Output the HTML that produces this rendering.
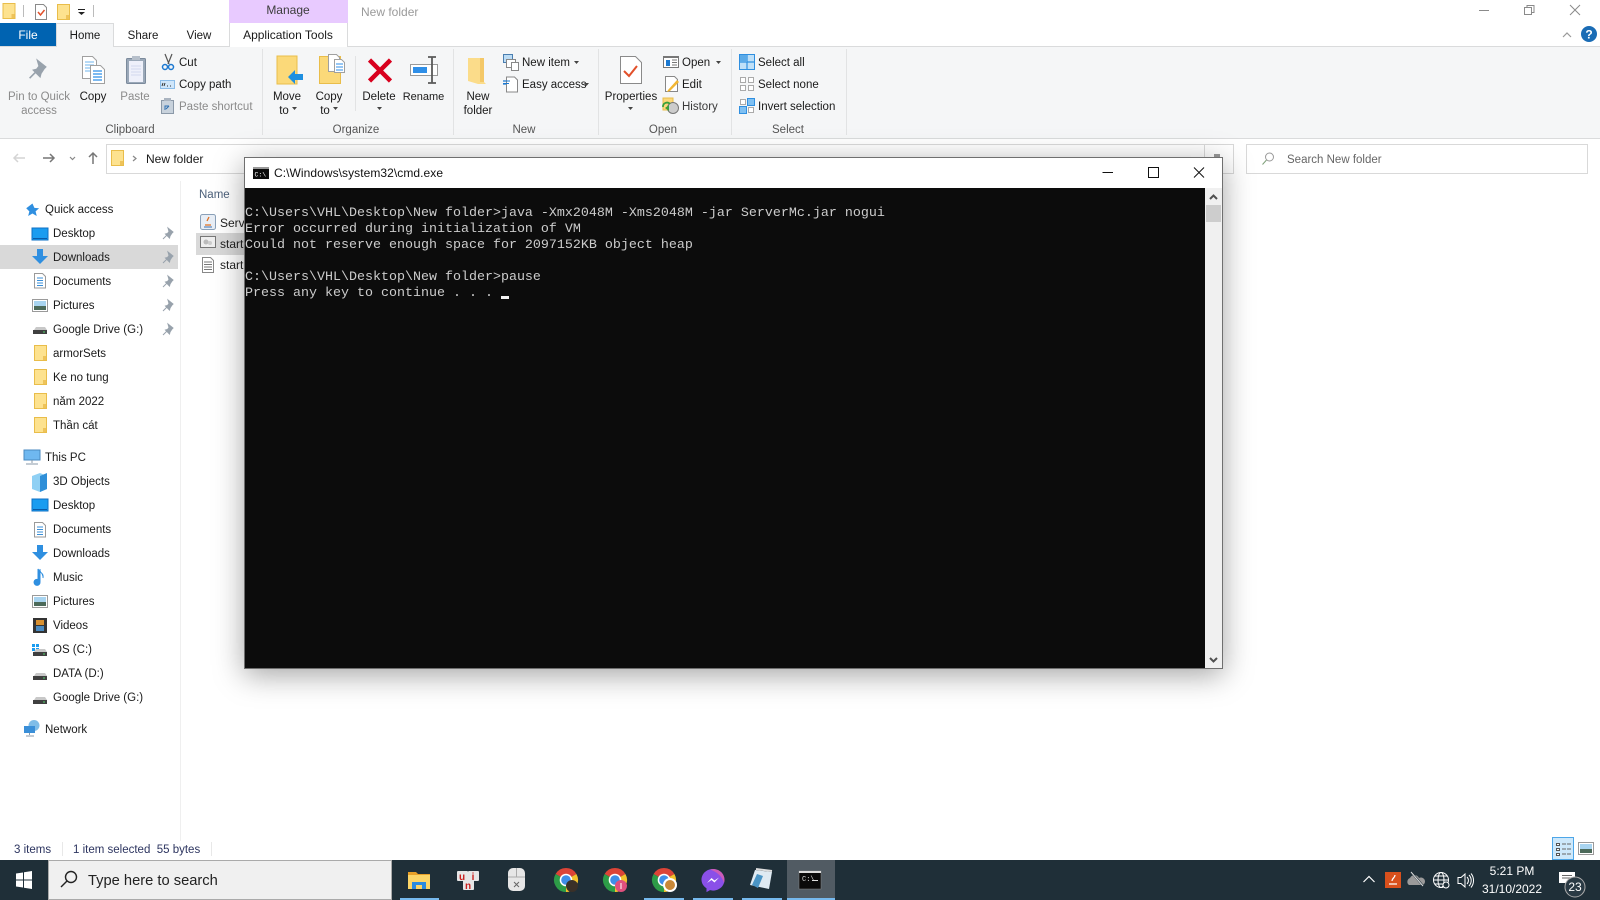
<!DOCTYPE html>
<html><head><meta charset="utf-8"><title>cmd</title>
<style>
html,body{margin:0;padding:0;background:#fff;width:1600px;height:900px;overflow:hidden}
svg{display:block;position:absolute;left:0;top:0}
text{font-family:"Liberation Sans","Noto Sans CJK SC",sans-serif;font-size:11.5px;fill:#1a1a1a;dominant-baseline:auto}
.m{text-anchor:middle}
.g{fill:#8b8b8b}
.r{fill:#3c3c3c}
.t{fill:#262626}
.f{font-size:12px}
.c{font-family:"Liberation Mono",monospace;font-size:13.33px;fill:#cccccc}
.w{fill:#fff}
#cmd{position:absolute;left:244px;top:157px;width:979px;height:512px;background:#fff;border:1px solid #6f6f6f;box-sizing:border-box;box-shadow:0 6px 28px rgba(0,0,0,.36)}
</style></head><body>
<svg width="1600" height="900" viewBox="0 0 1600 900">
<defs>
<g id="fold"><rect x=".5" y=".5" width="12" height="15" fill="#fde28f" stroke="#e9bd4a"/><rect x="9" y="11" width="3" height="4" fill="#eec35a"/></g>
<g id="pin"><path d="M6 1l5 4-1 1-2 3-.5 2-4-4 2-.5 1.500-2zM4.500 8.500L1 12" fill="#98a2ac" stroke="#98a2ac" stroke-width="1"/></g>
<g id="drive"><path d="M2 7l2-3h9l2 3z" fill="#c8c8c8"/><rect x="1" y="7" width="14" height="4" fill="#3f3f3f"/><rect x="11" y="8.500" width="2" height="1" fill="#4fd06a"/></g>
<g id="desk"><rect x="0" y="0" width="16" height="12" fill="#1a9cf0" stroke="#0f70c4"/><rect x="1" y="10" width="14" height="1" fill="#0a5aa8"/></g>
<g id="dl"><path d="M5 0h6v7h5l-8 8-8-8h5z" fill="#2f8fe0"/></g>
<g id="doc"><path d="M.5.5h8l3 3v11.500H.5z" fill="#fff" stroke="#9a9a9a"/><path d="M3 5h6M3 7.500h6M3 10h6M3 12.500h6" stroke="#3a8fd8"/></g>
<g id="pic"><rect x=".5" y=".5" width="15" height="12" fill="#fff" stroke="#9a9a9a"/><rect x="2" y="2" width="12" height="5" fill="#a8d4f0"/><rect x="2" y="7" width="12" height="4" fill="#4c6a5a"/></g>
<g id="chrome"><path d="M0 0L-10.400-6A12 12 0 0 1 10.400-6z" fill="#dc4437"/><path d="M0 0L10.400-6A12 12 0 0 1 0 12z" fill="#f3c22c"/><path d="M0 0L0 12A12 12 0 0 1-10.400-6z" fill="#2d9c47"/><circle r="6.300" fill="#fff"/><circle r="4.800" fill="#3f8ee8"/></g>
<path id="arr" d="M0 0h5l-2.500 3z" fill="#444"/>
</defs>

<!-- title row -->
<use href="#fold" x="2.500" y="3"/>
<rect x="23" y="5" width="1" height="12" fill="#bbb"/>
<path d="M35.500 4.500h8l3 3v12h-11z" fill="#fff" stroke="#8a8a8a"/><path d="M38 12l2.500 3 4-5" fill="none" stroke="#e2502a" stroke-width="1.500"/>
<use href="#fold" x="57" y="4"/>
<rect x="78" y="9" width="7" height="1" fill="#222"/><path d="M78 12h7l-3.500 3z" fill="#222"/>
<rect x="93" y="5" width="1" height="12" fill="#bbb"/>
<rect x="229" y="0" width="119" height="23" fill="#e8caff"/>
<text class="m r f" x="288" y="14">Manage</text>
<text x="361" y="16" class="g f" style="fill:#9a9a9a">New folder</text>
<!-- window controls -->
<path d="M1479 10.500h10" stroke="#8a8a8a"/>
<path d="M1524.500 7.500h7v7h-7zM1527 7V5.500h7v7h-2.500" fill="none" stroke="#8a8a8a"/>
<path d="M1570 5l10 10M1580 5l-10 10" stroke="#8a8a8a"/>
<path d="M1563 37l4-4 4 4" fill="none" stroke="#999" stroke-width="1.200"/>
<circle cx="1589" cy="34" r="8" fill="#1a6cb5"/><text class="m w" x="1589" y="38.500" style="font-size:12px;font-weight:bold">?</text>

<!-- tabs -->
<rect x="0" y="46" width="1600" height="92" fill="#f5f6f7"/>
<rect x="0" y="46" width="1600" height="1" fill="#dadbdc"/>
<rect x="0" y="138" width="1600" height="1" fill="#dadbdc"/>
<rect x="0" y="23" width="56" height="23" fill="#0063b1"/>
<text class="m w f" x="28" y="39">File</text>
<path d="M56.500 47V23.500h57V47" fill="#f5f6f7" stroke="#dadbdc"/>
<text class="m" x="85" y="39">Home</text>
<text class="m" x="143" y="39">Share</text>
<text class="m" x="199" y="39">View</text>
<path d="M229.500 46V23.500h118V46" fill="#fff" stroke="#dadbdc"/>
<rect x="230" y="23" width="117" height="24" fill="#fff"/>
<text class="m f" x="288" y="39">Application Tools</text>

<!-- ribbon seps -->
<g fill="#e2e3e4"><rect x="262" y="49" width="1" height="86"/><rect x="453" y="49" width="1" height="86"/><rect x="598" y="49" width="1" height="86"/><rect x="731" y="49" width="1" height="86"/><rect x="846" y="49" width="1" height="86"/><rect x="355" y="56" width="1" height="55"/></g>

<!-- clipboard -->
<g transform="translate(28,59) scale(1.600)"><use href="#pin"/></g>
<text class="m g" x="39" y="100">Pin to Quick</text><text class="m g" x="39" y="114">access</text>
<path d="M82.500 56.500h10l4 4v18h-14z" fill="#fff" stroke="#a0a0a0"/><path d="M85 62h9M85 65h9M85 68h9M85 71h9" stroke="#6fb4ee"/>
<path d="M90.500 65.500h10l4 4v14h-14z" fill="#fff" stroke="#a0a0a0"/><path d="M93 71h9M93 74h9M93 77h9M93 80h9" stroke="#2f8fe8" stroke-width="1.200"/>
<text class="m" x="93" y="100">Copy</text>
<rect x="126.500" y="58.500" width="19" height="25" rx="1" fill="#9aa8b8" stroke="#7b8a9c"/><rect x="129" y="61" width="14" height="21" fill="#eef0fa"/><path d="M131 66h10M131 69h10M131 72h10M131 75h10" stroke="#d3d8ee"/><rect x="132" y="56" width="8" height="4" fill="#b6bfca"/>
<text class="m g" x="135" y="100">Paste</text>
<path d="M165 54l4 10M172 54l-4 10" stroke="#555" stroke-width="1.200"/><circle cx="165" cy="67" r="2.500" fill="none" stroke="#1b78d0" stroke-width="1.500"/><circle cx="171" cy="67" r="2.500" fill="none" stroke="#1b78d0" stroke-width="1.500"/>
<text x="179" y="66">Cut</text>
<rect x="160.500" y="80.500" width="14" height="8" fill="#cfe6fa" stroke="#8bbce8"/><path d="M162 86l1-3M164 86l1-3M167 86h1M170 86h1M173 86h0" stroke="#333"/>
<text x="179" y="88">Copy path</text>
<rect x="161.500" y="100.500" width="12" height="13" fill="#c8d2dc" stroke="#8b99a8"/><rect x="164" y="98" width="7" height="3" fill="#aab4c0"/><path d="M165 110v-4h4M169 106l-3 3" stroke="#2d6fb0" fill="none"/>
<text x="179" y="110" class="g">Paste shortcut</text>
<text class="m r" x="130" y="133" style="fill:#555">Clipboard</text>

<!-- organize -->
<rect x="277" y="56" width="20" height="28" fill="#fbd979" stroke="#e9bd4a"/>
<path d="M288 77l7-7v4h8v6h-8v4z" fill="#1e8fe0"/>
<text class="m" x="287" y="100">Move</text><text class="m" x="284" y="114">to</text><use href="#arr" x="292" y="107"/>
<rect x="319.500" y="56.500" width="21" height="27" fill="#fbd979" stroke="#e9bd4a"/>
<path d="M328.500 54.500h8l3 3v14h-11z" fill="#fff" stroke="#a0a0a0"/><path d="M334.500 59.500h7l3 3v10h-10z" fill="#fff" stroke="#a0a0a0"/><path d="M336 64h7M336 67h7M336 70h7" stroke="#2f8fe8"/>
<text class="m" x="329" y="100">Copy</text><text class="m" x="325" y="114">to</text><use href="#arr" x="333" y="107"/>
<path d="M369.500 60l21 21M390.500 60l-21 21" stroke="#d8001e" stroke-width="4.500"/>
<text class="m" x="379" y="100">Delete</text><use href="#arr" x="377" y="107"/>
<rect x="410.500" y="64.500" width="27" height="11" fill="#fff" stroke="#9a9a9a"/><rect x="413" y="67" width="14" height="6" fill="#2f8fe8"/><path d="M428 57h8M432 57v26M428 83h8" stroke="#5a5a5a" stroke-width="1.800" fill="none"/>
<text class="m" x="423.500" y="100" style="font-size:11px">Rename</text>
<text class="m r" x="356" y="133" style="fill:#555">Organize</text>

<!-- new -->
<path d="M468 58h16v24l2 2-8 0-10-3z" fill="#fbdc8a"/><rect x="480" y="58" width="4" height="24" fill="#f4c868"/>
<text class="m" x="478" y="100">New</text><text class="m" x="478" y="114">folder</text>
<rect x="503.500" y="54.500" width="9" height="8" fill="#bcdcf5" stroke="#4a7eb0"/><rect x="506.500" y="59.500" width="9" height="8" fill="#fff" stroke="#888"/><rect x="511.500" y="62.500" width="7" height="8" fill="#fff" stroke="#888"/>
<text x="522" y="66">New item</text><use href="#arr" x="574" y="61"/>
<path d="M503 81h7M503 84h6" stroke="#1b78d0" stroke-width="1.200"/><path d="M506.500 77h8l3 3v12h-11z" fill="#fff" stroke="#888"/><path d="M503 81h7M503 83.500h6" stroke="#1b78d0"/>
<text x="522" y="88">Easy access</text><use href="#arr" x="584" y="83"/>
<text class="m r" x="524" y="133" style="fill:#555">New</text>

<!-- open -->
<path d="M620.500 56.500h15l6 6v21h-21z" fill="#fff" stroke="#8a8a8a"/><path d="M624 71l5 5 8-10" fill="none" stroke="#e2502a" stroke-width="2"/>
<text class="m" x="631" y="100">Properties</text><use href="#arr" x="628" y="107"/>
<rect x="663.500" y="56.500" width="15" height="11" fill="#fff" stroke="#777"/><rect x="663" y="56" width="16" height="2" fill="#777"/><rect x="666" y="60" width="4" height="6" fill="#1b78d0"/><path d="M672 60h5M672 62.500h5M672 65h5" stroke="#777"/>
<text x="682" y="66">Open</text><use href="#arr" x="716" y="61"/>
<path d="M665.500 76.500h9l3 3v12h-12z" fill="#fff" stroke="#888"/><path d="M668 90l9-10 2 2-9 9-3 1z" fill="#f2b632"/>
<text x="682" y="88">Edit</text>
<rect x="663" y="98" width="10" height="12" fill="#fcd87a" stroke="#e9bd4a"/><circle cx="673" cy="108" r="5.500" fill="#ccc" stroke="#777"/><path d="M665 108l4-3v6z" fill="#3aa03a"/><path d="M663 107a4 4 0 0 1 7-3" fill="none" stroke="#3aa03a" stroke-width="1.800"/>
<text x="682" y="110" style="fill:#3a3a3a">History</text>
<text class="m r" x="663" y="133" style="fill:#555">Open</text>

<!-- select -->
<rect x="739.500" y="54.500" width="15" height="15" fill="#bfe0f8" stroke="#2f8fe0"/><path d="M747 54v16M739 62h16" stroke="#2f8fe0" stroke-width="1.200"/><rect x="740" y="55" width="7" height="7" fill="#5aaae8"/>
<text x="758" y="66">Select all</text>
<g fill="#fff" stroke="#aaa"><rect x="740.500" y="77.500" width="5" height="5"/><rect x="748.500" y="77.500" width="5" height="5"/><rect x="740.500" y="85.500" width="5" height="5"/><rect x="748.500" y="85.500" width="5" height="5"/></g>
<text x="758" y="88">Select none</text>
<rect x="740.500" y="99.500" width="5" height="5" fill="#fff" stroke="#aaa"/><rect x="747.500" y="98.500" width="7" height="7" fill="#7fc0f2" stroke="#2f8fe0"/><rect x="739.500" y="106.500" width="7" height="7" fill="#7fc0f2" stroke="#2f8fe0"/><rect x="748.500" y="107.500" width="5" height="5" fill="#fff" stroke="#aaa"/>
<text x="758" y="110">Invert selection</text>
<text class="m r" x="788" y="133" style="fill:#555">Select</text>

<!-- address row -->
<g transform="translate(0,-1)">
<path d="M25 159H14m4-4l-4 4 4 4" fill="none" stroke="#d4d4d4" stroke-width="1.500"/>
<path d="M43 159h11m-4-4l4 4-4 4" fill="none" stroke="#777" stroke-width="1.500"/>
<path d="M70 158l2.500 2.500 2.500-2.500" fill="none" stroke="#888" stroke-width="1.200"/>
<path d="M93 165v-11m-4 4l4-4 4 4" fill="none" stroke="#777" stroke-width="1.500"/>
</g>
<rect x="106.500" y="144.500" width="1127" height="29" fill="#fff" stroke="#d9d9d9"/>
<rect x="1204" y="145" width="1" height="28" fill="#d9d9d9"/>
<rect x="1214" y="154" width="6" height="7" fill="#999"/>
<use href="#fold" x="111" y="150"/>
<path d="M133 156l3 2.500-3 2.500" fill="none" stroke="#888" stroke-width="1.200"/>
<text x="146" y="163" class="f">New folder</text>
<rect x="1246.500" y="144.500" width="341" height="29" fill="#fff" stroke="#d9d9d9"/>
<circle cx="1269.500" cy="157" r="4" fill="none" stroke="#9a9a9a"/><path d="M1266.500 160l-4 4.500" stroke="#7fa07a"/>
<text x="1287" y="163" style="fill:#666">Search New folder</text>

<!-- nav pane -->
<rect x="180" y="181" width="1" height="660" fill="#efefef"/>
<rect x="0" y="245" width="178" height="24" fill="#d9d9d9"/>
<g transform="translate(27,202) scale(.78)"><path d="M7 2l2.500 5.500 6 .5-4.500 4 1.500 6-5.500-3.300L1.500 18l1.500-6L-1 8z" fill="#2f8fe0"/></g>
<text x="45" y="213">Quick access</text>
<use href="#desk" x="32" y="228"/><text x="53" y="237">Desktop</text>
<use href="#dl" x="32" y="249"/><text x="53" y="261">Downloads</text>
<use href="#doc" x="34" y="273"/><text x="53" y="285">Documents</text>
<use href="#pic" x="32" y="299"/><text x="53" y="309">Pictures</text>
<use href="#drive" x="32" y="323"/><text x="53" y="333">Google Drive (G:)</text>
<use href="#fold" x="34" y="345"/><text x="53" y="357">armorSets</text>
<use href="#fold" x="34" y="369"/><text x="53" y="381">Ke no tung</text>
<use href="#fold" x="34" y="393"/><text x="53" y="405">năm 2022</text>
<use href="#fold" x="34" y="417"/><text x="53" y="429">Thần cát</text>
<use href="#pin" x="162" y="227"/><use href="#pin" x="162" y="251"/><use href="#pin" x="162" y="275"/><use href="#pin" x="162" y="299"/><use href="#pin" x="162" y="323"/>
<rect x="24" y="450" width="16" height="10" fill="#6fb8f0" stroke="#4a8ac0"/><path d="M32 460v3M26 464h12" stroke="#8a9aa8"/>
<text x="45" y="461">This PC</text>
<path d="M40 473l7 3v13l-7 3-8-3v-13z" fill="#8fd0f4"/><path d="M40 476l7-3v16l-7 3z" fill="#2f8fd8"/><text x="53" y="485">3D Objects</text>
<use href="#desk" x="32" y="499"/><text x="53" y="509">Desktop</text>
<use href="#doc" x="34" y="522"/><text x="53" y="533">Documents</text>
<use href="#dl" x="32" y="545"/><text x="53" y="557">Downloads</text>
<path d="M40 569v13a3 3 0 1 1-2-2.500V569c2 4 6 4 5 9" fill="#2f8fe0" stroke="#2f8fe0"/><text x="53" y="581">Music</text>
<use href="#pic" x="32" y="595"/><text x="53" y="605">Pictures</text>
<rect x="33" y="618" width="14" height="15" fill="#333"/><rect x="36" y="620" width="8" height="5" fill="#d89030"/><rect x="36" y="626" width="8" height="5" fill="#4a8ac0"/><text x="53" y="629">Videos</text>
<g fill="#1b9cf0"><rect x="32" y="644" width="3" height="3"/><rect x="36" y="644" width="3" height="3"/><rect x="32" y="648" width="3" height="3"/><rect x="36" y="648" width="3" height="3"/></g><use href="#drive" x="32" y="645"/><text x="53" y="653">OS (C:)</text>
<use href="#drive" x="32" y="669"/><text x="53" y="677">DATA (D:)</text>
<use href="#drive" x="32" y="693"/><text x="53" y="701">Google Drive (G:)</text>
<circle cx="34" cy="725.500" r="5.500" fill="#7fbde8"/><rect x="24" y="726" width="11" height="7" fill="#3a8fd8"/><path d="M29.500 733v2M26 736h8" stroke="#8a9aa8"/>
<text x="45" y="733">Network</text>

<!-- file list -->
<text x="199" y="198" style="fill:#4c607a">Name</text>
<rect x="196" y="233" width="50" height="22" fill="#d9d9d9"/>
<rect x="200.500" y="214.500" width="15" height="15" rx="2" fill="#e8eef6" stroke="#8aa0b8"/><path d="M205 225h6M207 221l2-4" stroke="#e07020" stroke-width="1.300"/><path d="M204 227h8" stroke="#3a6fb0"/>
<text x="220" y="227" class="f" style="fill:#222">Server</text>
<rect x="200.500" y="236.500" width="15" height="11" fill="#eee" stroke="#777"/><circle cx="206" cy="242" r="2.500" fill="#bbb"/><circle cx="210" cy="243" r="2" fill="#ccc"/>
<text x="220" y="248" class="f" style="fill:#222">start</text>
<path d="M202.500 257.500h8l3 3v12h-11z" fill="#fff" stroke="#888"/><path d="M204 262h8M204 264.500h8M204 267h8M204 269.500h8" stroke="#777"/>
<text x="220" y="269" class="f" style="fill:#222">start.</text>

<!-- status bar -->
<text x="14" y="853" style="fill:#2d3560">3 items</text>
<rect x="62" y="842" width="1" height="14" fill="#e8e8e8"/>
<text x="73" y="853" style="fill:#2d3560" xml:space="preserve">1 item selected  55 bytes</text>
<rect x="211" y="842" width="1" height="14" fill="#e8e8e8"/>
<rect x="1552.500" y="837.500" width="21" height="22" fill="#cde8fb" stroke="#4da6e8"/>
<g fill="#fff" stroke="#555"><rect x="1556.500" y="843.500" width="3" height="2"/><rect x="1556.500" y="848.500" width="3" height="2"/><rect x="1556.500" y="853.500" width="3" height="2"/></g><path d="M1562 844h9M1562 849h9M1562 854h9" stroke="#666" stroke-dasharray="4 1"/>
<use href="#pic" x="1578" y="842"/>

<!-- taskbar -->
<rect x="0" y="860" width="1600" height="40" fill="#1f2f38"/>
<g fill="#fff"><path d="M16 873.500l7-1v7h-7zM24 872.300l8-1.300v8.500h-8zM16 880.500h7v7l-7-1zM24 880.500h8V889l-8-1.200z"/></g>
<rect x="48.500" y="860.500" width="343" height="39" fill="#f0f0f0" stroke="#aaa"/>
<circle cx="71" cy="877" r="5.500" fill="none" stroke="#222" stroke-width="1.400"/><path d="M67 881l-6 6" stroke="#222" stroke-width="1.400"/>
<text x="88" y="885" style="font-size:14.700px;fill:#222">Type here to search</text>

<rect x="787" y="860" width="48" height="40" fill="#515b63"/>
<!-- explorer -->
<path d="M408 872h8l2 2h12v15h-22z" fill="#e8a028"/><rect x="408" y="875" width="22" height="14" fill="#fcd567"/><rect x="412" y="882" width="14" height="7" fill="#2a8ae0"/><rect x="416" y="885" width="6" height="4" fill="#fcd567"/>
<rect x="400" y="898" width="39" height="2" fill="#76b9ed"/>
<!-- uni -->
<g fill="#e6e6e6"><rect x="457" y="871" width="11" height="10" rx="1"/><rect x="468" y="871" width="11" height="10" rx="1"/><rect x="463" y="880" width="11" height="10" rx="1"/></g>
<text class="m" x="462" y="880" style="fill:#c8201e;font-size:10px;font-weight:bold">u</text><text class="m" x="473" y="880" style="fill:#c8201e;font-size:10px;font-weight:bold">i</text><text class="m" x="468" y="889" style="fill:#c8201e;font-size:10px;font-weight:bold">n</text>
<!-- mouse -->
<rect x="508" y="868" width="17" height="23" rx="5" fill="#e6e6e6"/><path d="M516.500 868v9M508 877h17" stroke="#aaa"/><path d="M514 882l5 5M519 882l-5 5" stroke="#666"/>
<!-- chrome -->
<use href="#chrome" x="566" y="880"/><circle cx="572" cy="886" r="6" fill="#3a3028"/>
<use href="#chrome" x="615" y="880"/><circle cx="621" cy="886" r="6" fill="#e0507e"/><rect x="620.500" y="883" width="1" height="6" fill="#fff"/>
<use href="#chrome" x="664" y="880"/><circle cx="670" cy="885" r="7" fill="#fff"/><circle cx="670" cy="885" r="5" fill="#c88838"/>
<rect x="644" y="898" width="40" height="2" fill="#76b9ed"/>
<!-- messenger -->
<path d="M713 869c6.500 0 11.500 4.800 11.500 10.800s-5 10.800-11.500 10.800l-3-.5-3.500 2v-3.800c-3-2-5-5-5-8.500 0-6 5-10.800 11.500-10.800z" fill="#8a50e8"/><path d="M713 869c6.500 0 11.500 4.800 11.500 10.800 0 1.200-.2 2.200-.5 3.200-2-7-7-11-14-13.500z" fill="#e25fa8" opacity=".75"/><path d="M707 883l4.500-5 3 2.500 4.500-3-4.500 5-3-2.500z" fill="#fff"/>
<rect x="693" y="898" width="40" height="2" fill="#76b9ed"/>
<!-- notepad -->
<path d="M755 870l17 2-3 17-19-4z" fill="#dfeaf2"/><path d="M752 885l5-11 6 2-5 12z" fill="#4a94c4"/><path d="M756 869l16 2" stroke="#ddd" stroke-width="2"/>
<rect x="742" y="898" width="40" height="2" fill="#76b9ed"/>
<!-- cmd icon -->
<rect x="799" y="871" width="22" height="18" fill="#0a0a0a" stroke="#888" stroke-width=".5"/><rect x="799" y="871" width="22" height="2" fill="#ddd"/><text x="802" y="881" style="font-size:7px;fill:#ddd;font-family:'Liberation Mono',monospace">C:\</text><rect x="812" y="880" width="6" height="1" fill="#ddd"/>
<rect x="787" y="898" width="48" height="2" fill="#76b9ed"/>

<!-- tray -->
<path d="M1363.500 882l5.500-5.500 5.500 5.500" fill="none" stroke="#fff" stroke-width="1.200"/>
<rect x="1385" y="872" width="16" height="16" fill="#d8501c"/><path d="M1389 884h8M1392 881c0-3 3-3 3-6" stroke="#fff" stroke-width="1.300" fill="none"/>
<path d="M1409 885a4 4 0 0 1 1-7 5 5 0 0 1 9 0 4 4 0 0 1 4 7z" fill="#9a9a9a"/><path d="M1412 873l12 14" stroke="#1f2f38" stroke-width="2"/><path d="M1411 872l12 14" stroke="#ddd"/>
<circle cx="1441" cy="880" r="7.500" fill="none" stroke="#fff"/><ellipse cx="1441" cy="880" rx="3" ry="7.500" fill="none" stroke="#fff"/><path d="M1433.500 880h15M1435 876h12M1435 884h12" stroke="#fff"/><circle cx="1446" cy="885" r="3" fill="#1f2f38" stroke="#fff"/>
<path d="M1458 877.500h3l4-3.500v13l-4-3.500h-3z" fill="none" stroke="#fff"/><path d="M1467 877a5 5 0 0 1 0 7M1469 875a8 8 0 0 1 0 11M1471 873.500a11 11 0 0 1 0 14" fill="none" stroke="#fff"/>
<text class="m w f" x="1512" y="875">5:21 PM</text>
<text class="m w f" x="1512" y="893">31/10/2022</text>
<path d="M1559 872h16v11h-7v3l-3-3h-6z" fill="#fff"/><path d="M1562 875.500h10M1562 878h10" stroke="#666"/>
<circle cx="1575" cy="887" r="10" fill="#2a3a44" stroke="#aaa"/><text class="m w f" x="1575" y="891">23</text>
</svg>

<div id="cmd">
<svg width="977" height="510" viewBox="245 158 977 510">
<rect x="245" y="158" width="977" height="510" fill="#fff"/>
<rect x="253" y="167" width="16" height="12" fill="#0c0c0c"/><rect x="253" y="167" width="16" height="2" fill="#999"/>
<text x="254.500" y="176.500" style="font-size:6.500px;fill:#fff;font-family:'Liberation Mono',monospace">C:\</text>
<text x="274" y="177" style="fill:#111;font-size:12px" textLength="169">C:\Windows\system32\cmd.exe</text>
<path d="M1102.500 172.500h10.500" stroke="#111"/>
<rect x="1148.500" y="167.500" width="10" height="10" fill="none" stroke="#111"/>
<path d="M1194 167.500l10 10M1204 167.500l-10 10" stroke="#111"/>
<rect x="245" y="188" width="960" height="480" fill="#0c0c0c"/>
<rect x="1205" y="188" width="17" height="480" fill="#f0f0f0"/>
<path d="M1210 199l3.500-3.500 3.500 3.500" fill="none" stroke="#505050" stroke-width="2"/>
<rect x="1206" y="205" width="15" height="17" fill="#cdcdcd"/>
<path d="M1210 658l3.500 3.500 3.500-3.500" fill="none" stroke="#505050" stroke-width="2"/>
<g>
<text class="c" x="245" y="216" xml:space="preserve">C:\Users\VHL\Desktop\New folder&gt;java -Xmx2048M -Xms2048M -jar ServerMc.jar nogui</text>
<text class="c" x="245" y="232" xml:space="preserve">Error occurred during initialization of VM</text>
<text class="c" x="245" y="248" xml:space="preserve">Could not reserve enough space for 2097152KB object heap</text>
<text class="c" x="245" y="280" xml:space="preserve">C:\Users\VHL\Desktop\New folder&gt;pause</text>
<text class="c" x="245" y="296" xml:space="preserve">Press any key to continue . . . </text>
</g>
<rect x="501" y="296" width="8" height="3" fill="#f2f2f2"/>
</svg>
</div>
</body></html>
